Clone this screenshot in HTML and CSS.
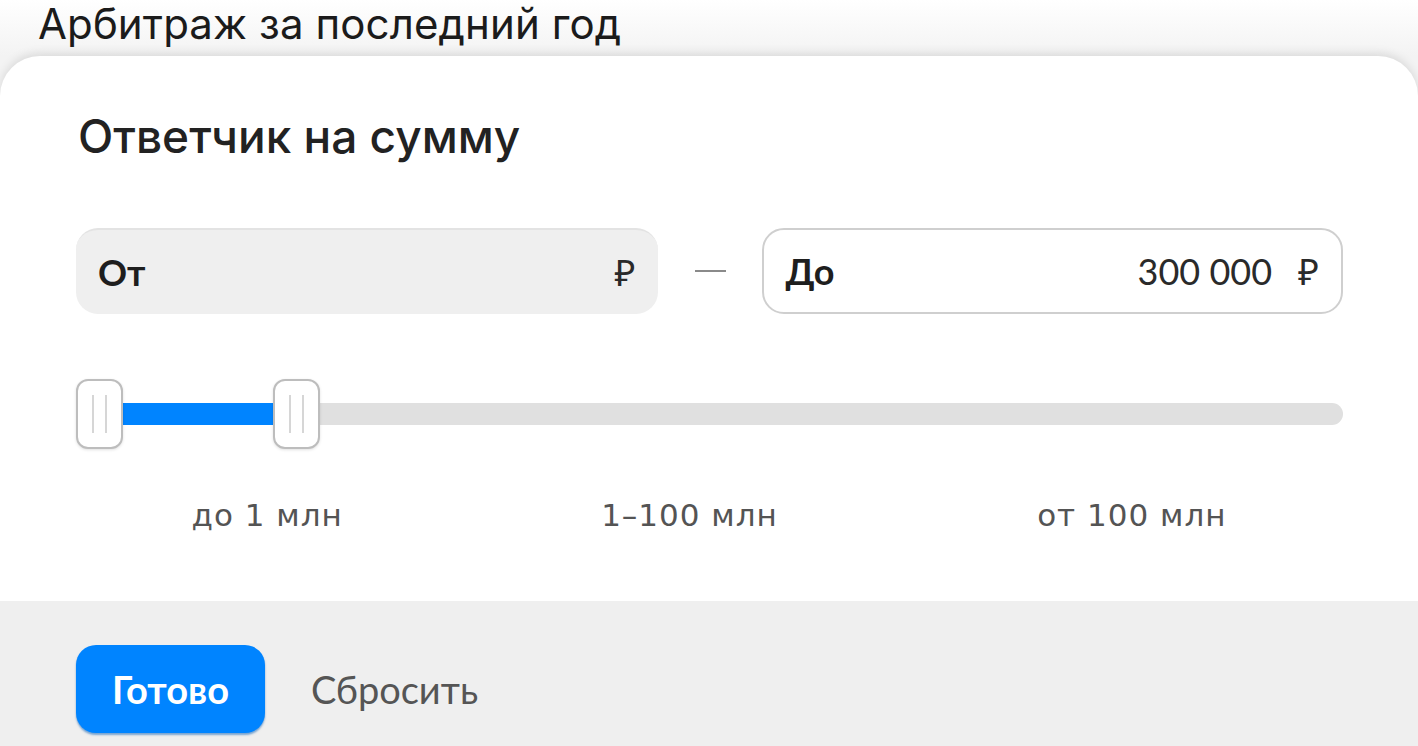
FILE: index.html
```html
<!DOCTYPE html>
<html lang="ru">
<head>
<meta charset="utf-8">
<link rel="stylesheet" href="styles.css">
</head>
<body>
<div class="page">
  <div class="behind">Арбитраж за последний год</div>
  <div class="sheet">
    <div class="content">
      <h2 class="title">Ответчик на сумму</h2>
      <div class="inputs">
        <div class="field field-from"><span class="label">От</span><span class="cur">₽</span></div>
        <span class="dash"></span>
        <div class="field field-to"><span class="label">До</span><span class="value">300 000</span><span class="cur">₽</span></div>
      </div>
      <div class="slider">
        <div class="track"></div>
        <div class="fill"></div>
        <div class="thumb thumb-a"><i></i><i></i></div>
        <div class="thumb thumb-b"><i></i><i></i></div>
      </div>
      <div class="ticks">
        <span class="tick">до 1 млн</span>
        <span class="tick">1–100 млн</span>
        <span class="tick">от 100 млн</span>
      </div>
    </div>
    <div class="footer">
      <button class="btn-done">Готово</button>
      <button class="btn-reset">Сбросить</button>
    </div>
  </div>
</div>
</body>
</html>
```
FILE: styles.css
```css
html, body {
  margin: 0;
  padding: 0;
  width: 1418px;
  height: 746px;
  overflow: hidden;
  background: #fff;
}
.page {
  width: 1418px;
  height: 746px;
  display: flex;
  flex-direction: column;
  background: linear-gradient(#fff 0, #f3f3f3 56px);
}
.behind {
  font-family: Inter, "Liberation Sans", sans-serif;
  font-size: 42px;
  letter-spacing: 0.1px;
  color: #1b1b1b;
  padding-left: 38px;
  height: 56px;
  line-height: 48px;
}
.sheet {
  flex: 1;
  background: #fff;
  border-radius: 40px 40px 0 0;
  box-shadow: 0 -3px 10px rgba(0,0,0,0.10);
  display: flex;
  flex-direction: column;
  overflow: hidden;
  font-family: Lato, "Noto Sans", sans-serif;
}
.content {
  flex: 1;
  padding: 0 75px 0 76px;
}
.title {
  margin: 52px 0 0 2px;
  font-family: Inter, sans-serif;
  font-size: 46px;
  font-weight: 500;
  color: #222;
  line-height: 56px;
}
.inputs {
  margin-top: 64px;
  display: flex;
  align-items: center;
}
.field {
  box-sizing: border-box;
  height: 86px;
  width: 582px;
  border-radius: 22px;
  display: flex;
  align-items: center;
  padding: 0 22px;
  font-size: 36px;
  color: #1e1e1e;
}
.field-from {
  background: #efefef;
  border-top: 2px solid #e3e3e3;
}
.field-to {
  background: #fff;
  border: 2px solid #cfcfcf;
  width: 581px;
  padding-left: 21px;
}
.label {
  font-weight: 700;
  flex: 1;
}
.value {
  font-weight: 400;
  margin-right: 26px;
  color: #2a2a2a;
}
.cur {
  font-weight: 400;
  color: #2a2a2a;
}
.dash {
  width: 32px;
  height: 2px;
  background: #8a8a8a;
  margin: 0 36px 0 37px;
}
.slider {
  position: relative;
  height: 70px;
  margin-top: 65px;
}
.track {
  position: absolute;
  left: 0;
  right: 0;
  top: 24px;
  height: 22px;
  border-radius: 11px;
  background: #e0e0e0;
}
.fill {
  position: absolute;
  left: 40px;
  width: 180px;
  top: 24px;
  height: 22px;
  background: #0084ff;
}
.thumb {
  position: absolute;
  top: 0;
  box-sizing: border-box;
  width: 47px;
  height: 70px;
  border: 2px solid #bdbdbd;
  border-radius: 12px;
  background: #fff;
  display: flex;
  justify-content: center;
  align-items: center;
  gap: 11px;
  box-shadow: 0 1px 3px rgba(0,0,0,0.12);
}
.thumb i {
  width: 2px;
  height: 38px;
  background: #d6d6d6;
}
.thumb-a { left: 0; }
.thumb-b { left: 197px; }
.ticks {
  display: grid;
  grid-template-columns: repeat(3, 1fr);
  margin-top: 48px;
  font-family: "DejaVu Sans", sans-serif;
  font-size: 31px;
  letter-spacing: 1px;
  color: #545454;
}
.tick {
  text-align: center;
  padding-right: 40px;
}
.tick:last-child { padding-right: 0; }
.footer {
  height: 145px;
  background: #efefef;
  display: flex;
  align-items: flex-end;
  padding: 0 0 13px 76px;
  box-sizing: border-box;
  gap: 46px;
}
.btn-done {
  width: 189px;
  height: 88px;
  border: 0;
  border-radius: 20px;
  background: #0084ff;
  color: #fff;
  font-family: Lato, "Noto Sans", sans-serif;
  font-size: 38px;
  font-weight: 700;
  box-shadow: 0 2px 2px rgba(0,90,180,0.5);
  padding: 0;
}
.btn-reset {
  height: 88px;
  border: 0;
  background: transparent;
  color: #555;
  font-family: Lato, "Noto Sans", sans-serif;
  font-size: 38px;
  padding: 0;
}
```
